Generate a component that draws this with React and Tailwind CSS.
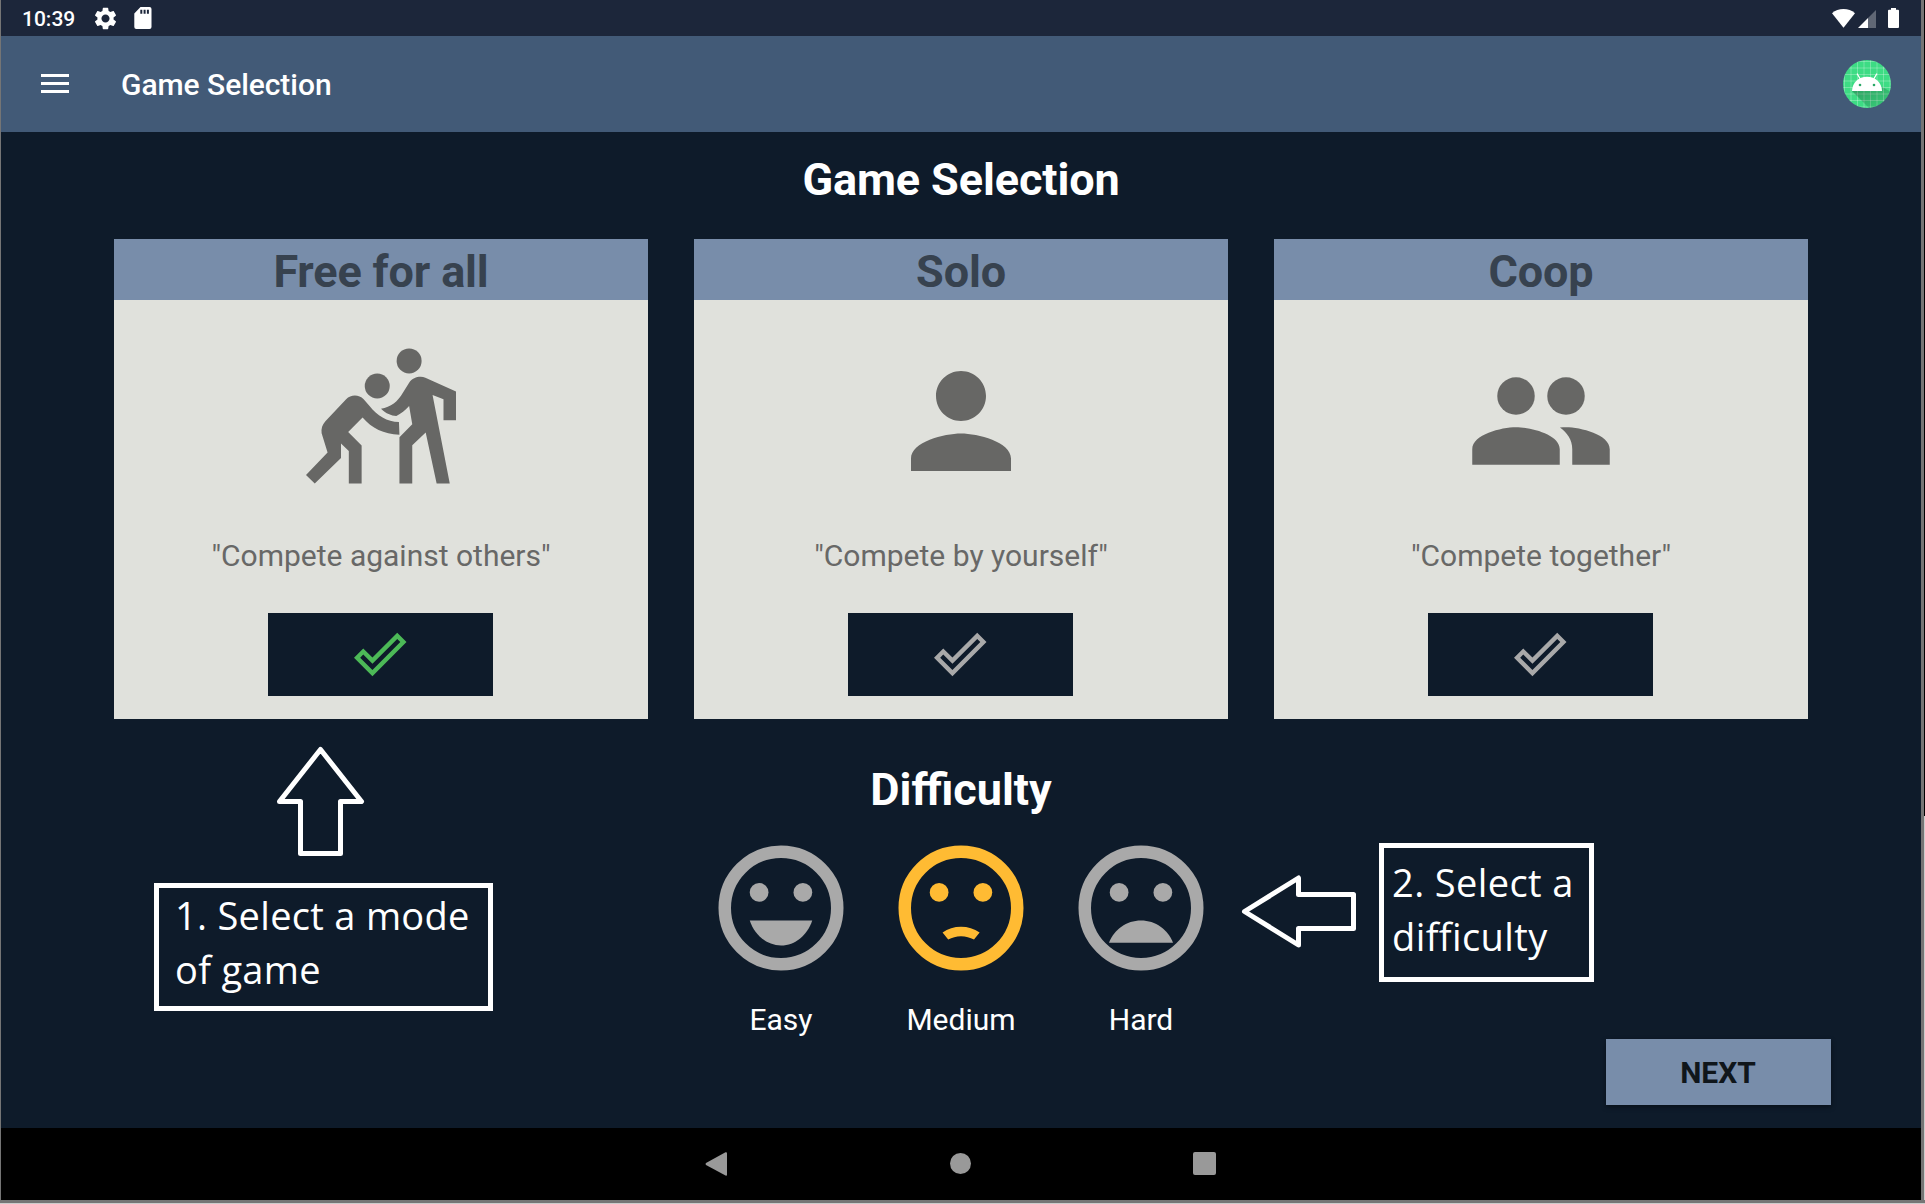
const MODES = [
  {
    title: "Free for all",
    caption: '"Compete against others"',
    selected: true,
    icon: (
      <>
        <circle cx="16.5" cy="2.38" r="2" />
        <path d="M24 11.88V7.28l-4.9-2.2c-.8-.35-2-.1-2.6.8l-1 1.6c-.75 1.35-1.95 2.35-3.5 2.55.85.8 1.6 1.1 2.45 1.15.75-.35 1.45-.95 2.05-1.6l.5 2.95-2.05 2.05v7.4h2.05v-6.1l2.15-2.05L20.9 21.98H23L20.25 7.85l1.75.65v3.38z" />
        <circle cx="11.4" cy="6.4" r="2" />
        <path d="M14.87 12.15c-1.9 0-3.5-1-4.7-2.55l-.95-1.1c-.75-.75-2.05-.75-2.8 0L3.1 12.05c-.5.55-.7 1.2-.6 1.9l.95 3.1L0 20.65 1.4 22l4.2-4.1v-2.3l1.25 1.2V22H8.9v-6.1l-2.15-2.15 2.3-2.3c1.5 1.75 3.35 2.65 5.9 2.75z" />
      </>
    ),
  },
  {
    title: "Solo",
    caption: '"Compete by yourself"',
    selected: false,
    icon: (
      <path d="M12 12c2.21 0 4-1.79 4-4s-1.79-4-4-4-4 1.79-4 4 1.79 4 4 4zm0 2c-2.67 0-8 1.34-8 4v2h16v-2c0-2.66-5.33-4-8-4z" />
    ),
  },
  {
    title: "Coop",
    caption: '"Compete together"',
    selected: false,
    icon: (
      <>
        <circle cx="8" cy="8" r="3" />
        <circle cx="16" cy="8" r="3" />
        <path d="M8 13c-2.33 0-7 1.17-7 3.5V19h14v-2.5C15 14.17 10.33 13 8 13zM16 13c-.29 0-.62.02-.97.05C16.19 13.89 17 15.02 17 16.5V19h6v-2.5c0-2.33-4.67-3.5-7-3.5z" />
      </>
    ),
  },
];

const LEVELS = [
  { name: "Easy", color: "text-[#a9a9a9]", mouth: "M12 18c2.28 0 4.22-1.66 5-4H7c.78 2.34 2.72 4 5 4z" },
  {
    name: "Medium",
    color: "text-[#ffbb33]",
    mouth: "M9.05 15.9C9.9 15.3 10.9 15 12 15s2.1.3 2.98.9l-.9 1.15c-.65-.35-1.3-.55-2.08-.55s-1.4.2-2.05.55z",
  },
  { name: "Hard", color: "text-[#a9a9a9]", mouth: "M12 14c-2.33 0-4.32 1.45-5.12 3.55h10.24C16.32 15.45 14.33 14 12 14z" },
];

function StatusBar() {
  return (
    <div className="flex h-9 items-center bg-[#1c263a] pl-[21px] pr-[22px] text-white">
      <span className="w-[54px] whitespace-nowrap text-[21px] font-medium leading-9 pt-px">10:39</span>
      <svg className="ml-[16px] size-[27px]" viewBox="0 0 24 24" fill="currentColor">
        <path d="M19.14 12.94c.04-.3.06-.61.06-.94 0-.32-.02-.64-.07-.94l2.03-1.58c.18-.14.23-.41.12-.61l-1.92-3.32c-.12-.22-.37-.29-.59-.22l-2.39.96c-.5-.38-1.03-.7-1.62-.94l-.36-2.54c-.04-.24-.24-.41-.48-.41h-3.84c-.24 0-.43.17-.47.41l-.36 2.54c-.59.24-1.13.57-1.62.94l-2.39-.96c-.22-.08-.47 0-.59.22L2.74 8.87c-.12.21-.08.47.12.61l2.03 1.58c-.05.3-.09.63-.09.94s.02.64.07.94l-2.03 1.58c-.18.14-.23.41-.12.61l1.92 3.32c.12.22.37.29.59.22l2.39-.96c.5.38 1.03.7 1.62.94l.36 2.54c.05.24.24.41.48.41h3.84c.24 0 .44-.17.47-.41l.36-2.54c.59-.24 1.13-.56 1.62-.94l2.39.96c.22.08.47 0 .59-.22l1.92-3.32c.12-.22.07-.47-.12-.61l-2.01-1.58zM12 15.6c-1.98 0-3.6-1.62-3.6-3.6s1.62-3.6 3.6-3.6 3.6 1.62 3.6 3.6-1.62 3.6-3.6 3.6z" />
      </svg>
      <svg className="ml-[15px] h-[22px] w-[18px]" viewBox="0 0 18 22" fill="currentColor">
        <path
          fillRule="evenodd"
          d="M6.5 0H15.5a2 2 0 0 1 2 2V20a2 2 0 0 1-2 2H2.3a2 2 0 0 1-2-2V6.5zM6.3 2.8V6.8H8.3V2.8zM9.6 2.8V6.8H11.6V2.8zM12.9 2.8V6.8H14.9V2.8z"
        />
      </svg>
      <div className="ml-auto flex h-[20px] items-end">
        <svg className="h-[19px] w-[23px]" viewBox="0 0 23 19" fill="currentColor">
          <path d="M0 4.2C3.2 1.3 7.2 0 11.5 0S19.8 1.3 23 4.2L11.5 18.8z" />
        </svg>
        <svg className="ml-[3px] size-[18px]" viewBox="0 0 18 18" fill="currentColor">
          <path d="M18 0V18H10V8z" opacity=".3" />
          <path d="M10 8V18H0z" />
        </svg>
        <svg className="ml-[12px] h-[20px] w-[11px]" viewBox="0 0 11 20" fill="currentColor">
          <path d="M3 0h5v1.7H10a1 1 0 0 1 1 1V19a1 1 0 0 1-1 1H1a1 1 0 0 1-1-1V2.7a1 1 0 0 1 1-1H3z" />
        </svg>
      </div>
    </div>
  );
}

function Avatar() {
  return (
    <svg className="size-12" viewBox="0 0 48 48">
      <defs>
        <clipPath id="avatar-disc">
          <circle cx="24" cy="24" r="24" />
        </clipPath>
        <linearGradient id="avatar-shade" x1="0" y1="0" x2="1" y2="1">
          <stop offset="0" stopColor="#000" stopOpacity=".28" />
          <stop offset="1" stopColor="#000" stopOpacity=".06" />
        </linearGradient>
      </defs>
      <g clipPath="url(#avatar-disc)">
        <rect width="48" height="48" fill="#3ddc84" />
        <path
          d="M1.5 0V48M8 0V48M14.5 0V48M21 0V48M27.5 0V48M34 0V48M40.5 0V48M47 0V48M0 1.5H48M0 8H48M0 14.5H48M0 21H48M0 27.5H48M0 34H48M0 40.5H48M0 47H48"
          stroke="#fff"
          strokeOpacity=".35"
          strokeWidth=".8"
        />
        <path d="M9 31L27 49H48V32L38.5 26.5 39 31z" fill="url(#avatar-shade)" />
        <path d="M9 31C9.3 22.5 15.5 16.8 24 16.8S38.7 22.5 39 31z" fill="#fff" />
        <path d="M17.3 19L14.3 14M30.7 19L33.7 14" stroke="#fff" strokeWidth="1.3" strokeLinecap="round" />
        <circle cx="17" cy="25" r="1.3" fill="#2aa866" />
        <circle cx="31" cy="25" r="1.3" fill="#2aa866" />
      </g>
    </svg>
  );
}

function AppBar() {
  return (
    <header className="flex h-24 items-center bg-[#425a77] pl-[40px] pr-[30px] text-white">
      <div className="mb-px flex w-7 flex-col gap-[5px]">
        <span className="h-[3px] bg-white" />
        <span className="h-[3px] bg-white" />
        <span className="h-[3px] bg-white" />
      </div>
      <span className="ml-[52px] pt-px text-[30px] font-medium leading-[36px] tracking-[-0.05px]">Game Selection</span>
      <div className="ml-auto size-12">
        <Avatar />
      </div>
    </header>
  );
}

function ModeCard({ mode }) {
  return (
    <section className="flex h-[480px] w-[534px] flex-col items-center bg-[#e0e1dc]">
      <h2 className="h-[61px] w-full bg-[#788daa] text-center text-[45px] font-bold leading-[66px] tracking-[-0.15px] text-[#37424f]">{mode.title}</h2>
      <svg className="mt-[46px] size-[150px] shrink-0 overflow-visible text-[#676765]" viewBox="0 0 24 24" fill="currentColor">
        {mode.icon}
      </svg>
      <p className="mt-[42px] text-[30px] leading-[35px] text-[#686867]">{mode.caption}</p>
      <button className="mr-px mt-[40px] flex h-[83px] w-[225px] items-center justify-center bg-[#0e1b2a]">
        <svg
          className={mode.selected ? "size-[52.5px] text-[#4cb957]" : "size-[52.5px] text-[#a9a9a9]"}
          viewBox="0 0 24 24"
          fill="currentColor"
        >
          <path d="M19.77 5.03l1.4 1.4L8.43 19.17l-5.6-5.6 1.4-1.4 4.2 4.2L19.77 5.03m0-2.83L8.43 13.54l-4.2-4.2L0 13.57 8.43 22 24 6.43 19.77 2.2z" />
        </svg>
      </button>
    </section>
  );
}

function Level({ level }) {
  return (
    <div className="flex w-[180px] flex-col items-center">
      <svg className={`size-[150px] ${level.color}`} viewBox="0 0 24 24" fill="currentColor">
        <circle cx="12" cy="12" r="9" fill="none" stroke="currentColor" strokeWidth="2" />
        <circle cx="8.5" cy="9.5" r="1.5" />
        <circle cx="15.5" cy="9.5" r="1.5" />
        <path d={level.mouth} />
      </svg>
      <span className="mt-[19px] text-[30px] leading-[35px]">{level.name}</span>
    </div>
  );
}

// Tutorial notes that float over the screen
function Notes() {
  return (
    <>
      <svg className="absolute left-[274px] top-[612px] h-[116px] w-[92px]" viewBox="275 744 92 116" fill="none" stroke="#fff" strokeWidth="5" strokeLinejoin="round">
        <path d="M320.5 749.5L361.5 801.5H340.5V853.5H300.5V801.5H279.5z" />
      </svg>
      <div className="absolute left-[153px] top-[751px] h-[128px] w-[339px] whitespace-nowrap border-[5px] border-white pl-[16px] font-['Open_Sans','Noto_Sans',sans-serif] text-[38px] leading-[54px] tracking-[0.3px]">
        1. Select a mode
        <br />
        of game
      </div>
      <svg className="absolute left-[1239px] top-[740px] h-[80px] w-[120px]" viewBox="1240 872 120 80" fill="none" stroke="#fff" strokeWidth="5" strokeLinejoin="round">
        <path d="M1244.5 911.5L1298.5 878V894.5H1353.5V928.5H1298.5V945z" />
      </svg>
      <div className="absolute left-[1378px] top-[711px] h-[139px] w-[215px] whitespace-nowrap border-[5px] border-white pl-[8px] pt-[7px] font-['Open_Sans','Noto_Sans',sans-serif] text-[38px] leading-[54px] tracking-[0.4px]">
        2. Select a
        <br />
        difficulty
      </div>
    </>
  );
}

function NavBar() {
  return (
    <nav className="flex h-[72px] items-center pl-[704px] text-[#999]">
      <svg className="h-6 w-[22px]" viewBox="0 0 22 24" fill="currentColor">
        <path d="M20.5.3Q22 0 22 1.2V22.8Q22 24 20.5 23.6L1 13Q0 12 1 11z" />
      </svg>
      <span className="mb-px ml-[223px] size-[21px] rounded-full bg-[#999]" />
      <span className="mb-px ml-[222px] size-[23px] rounded-[2px] bg-[#999]" />
    </nav>
  );
}

export default function App() {
  return (
    <div className="flex h-[1204px] w-[1925px] flex-col overflow-hidden bg-[#757575] font-[Roboto,sans-serif]">
      <div className="flex h-[1200px]">
        <div className="ml-px flex w-[1920px] flex-col bg-black">
          <StatusBar />
          <AppBar />
          <main className="relative flex h-[996px] flex-col items-center bg-[#0e1b2a] text-white">
            <h1 className="mt-[21px] text-[45px] font-bold leading-[53px] tracking-[-0.1px]">Game Selection</h1>
            <div className="mt-[33px] flex gap-[46px]">
              {MODES.map((mode) => (
                <ModeCard key={mode.title} mode={mode} />
              ))}
            </div>
            <h2 className="mt-[44px] text-[45px] font-bold leading-[53px]">Difficulty</h2>
            <div className="mt-[17px] flex">
              {LEVELS.map((level) => (
                <Level key={level.name} level={level} />
              ))}
            </div>
            <button className="mr-[90px] mt-[2px] h-[66px] w-[225px] self-end bg-[#788daa] pr-px text-[30px] font-bold leading-[68px] text-[#10161b] shadow-[0_2px_5px_rgba(0,0,0,0.45)]">
              NEXT
            </button>
            <Notes />
          </main>
          <NavBar />
        </div>
        <div className="ml-[3px] w-px bg-linear-to-b from-black from-68% to-[#cccccc] to-68%" />
      </div>
      <div className="mt-[3px] h-px bg-[#cccccc]" />
    </div>
  );
}
